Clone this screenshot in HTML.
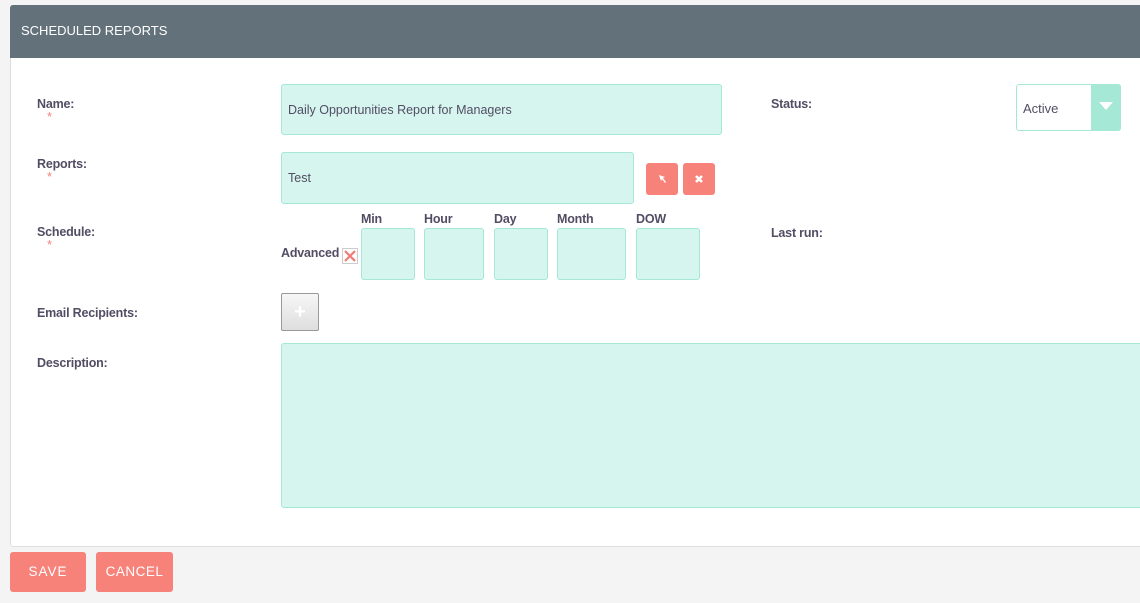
<!DOCTYPE html>
<html><head><meta charset="utf-8"><style>
body{margin:0;width:1140px;height:603px;background:#f4f4f4;font-family:"Liberation Sans",sans-serif;overflow:hidden;position:relative;color:#534d64}
.panel{position:absolute;left:10px;top:5px;width:1140px;height:542px;background:#fff;border:1px solid #ddd;border-radius:3px;box-sizing:border-box}
.hdr{position:absolute;left:10px;top:5px;width:1140px;height:53px;background:#63717a;border-radius:3px 0 0 0;color:#fff;font-size:13px;line-height:52px;padding-left:11px;box-sizing:border-box}
.lbl{position:absolute;font-weight:bold;font-size:12.5px;color:#534d64;letter-spacing:-0.2px}
.req{position:absolute;color:#f08377;font-size:13px}
.inp{position:absolute;background:#d5f5ee;border:1px solid #a5e8d6;border-radius:3px;box-sizing:border-box;font-size:12.5px;color:#534d64}
.btn{position:absolute;background:#f7827a;border-radius:3px;color:#fff}
.cap{position:absolute;font-weight:bold;font-size:12.5px;top:212px;letter-spacing:-0.2px}
</style></head><body>
<div class="panel"></div>
<div class="hdr">SCHEDULED REPORTS</div>

<div class="lbl" style="left:37px;top:97px">Name:</div><div class="req" style="left:47px;top:109px">*</div>
<div class="inp" style="left:281px;top:84px;width:441px;height:51px;line-height:51px;padding-left:6px">Daily Opportunities Report for Managers</div>
<div class="lbl" style="left:771px;top:97px">Status:</div>
<div style="position:absolute;left:1016px;top:84px;width:105px;height:47px;border:1px solid #a5e8d6;border-radius:3px;box-sizing:border-box;background:#fff;font-size:13px;line-height:47px;padding-left:6px">Active</div>
<div style="position:absolute;left:1091px;top:84px;width:30px;height:47px;background:#a5e8d6;border-radius:0 3px 3px 0"></div>
<div style="position:absolute;left:1099px;top:102px;width:0;height:0;border-left:7px solid transparent;border-right:7px solid transparent;border-top:8px solid #fff"></div>

<div class="lbl" style="left:37px;top:157px">Reports:</div><div class="req" style="left:47px;top:169px">*</div>
<div class="inp" style="left:281px;top:152px;width:353px;height:52px;line-height:50px;padding-left:6px">Test</div>
<div class="btn" style="left:646px;top:163px;width:32px;height:32px"><svg width="32" height="32"><path d="M13 12 L19 14 L17 15 L20 19 L19 20 L16 16 L15 18 Z" fill="#fff"/></svg></div>
<div class="btn" style="left:683px;top:163px;width:32px;height:32px"><svg width="32" height="32"><path d="M13 13 L19 19 M19 13 L13 19" stroke="#fff" stroke-width="2.6"/></svg></div>

<div class="lbl" style="left:37px;top:225px">Schedule:</div><div class="req" style="left:47px;top:237px">*</div>
<div class="lbl" style="left:281px;top:246px">Advanced</div>
<div style="position:absolute;left:342px;top:248px;width:14px;height:14px;border:1px solid #ccc;background:#fff"><svg width="14" height="14"><path d="M2 2 L12 12 M12 2 L2 12" stroke="#f07c74" stroke-width="2.2"/></svg></div>
<div class="cap" style="left:361px">Min</div><div class="cap" style="left:424px">Hour</div><div class="cap" style="left:494px">Day</div><div class="cap" style="left:557px">Month</div><div class="cap" style="left:636px">DOW</div>
<div class="inp" style="left:361px;top:228px;width:54px;height:52px"></div>
<div class="inp" style="left:424px;top:228px;width:60px;height:52px"></div>
<div class="inp" style="left:494px;top:228px;width:54px;height:52px"></div>
<div class="inp" style="left:557px;top:228px;width:69px;height:52px"></div>
<div class="inp" style="left:636px;top:228px;width:64px;height:52px"></div>
<div class="lbl" style="left:771px;top:226px">Last run:</div>

<div class="lbl" style="left:37px;top:306px">Email Recipients:</div>
<div style="position:absolute;left:281px;top:293px;width:38px;height:38px;box-sizing:border-box;border:1px solid #999;border-radius:2px;background:linear-gradient(#f6f6f6,#dedede);color:#fff;font-size:20px;text-align:center;line-height:36px;font-weight:bold">+</div>

<div class="lbl" style="left:37px;top:356px">Description:</div>
<div class="inp" style="left:281px;top:343px;width:870px;height:165px"></div>

<div class="btn" style="left:10px;top:552px;width:76px;height:40px;line-height:40px;text-align:center;font-size:13.5px;letter-spacing:1px">SAVE</div>
<div class="btn" style="left:96px;top:552px;width:77px;height:40px;line-height:40px;text-align:center;font-size:13.5px;letter-spacing:0.5px">CANCEL</div>
</body></html>
